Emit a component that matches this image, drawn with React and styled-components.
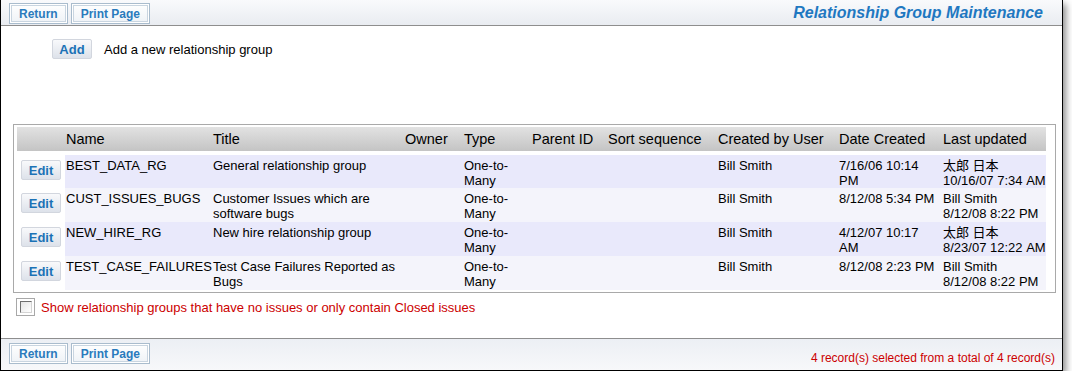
import React from 'react';
import styled, { createGlobalStyle } from 'styled-components';

const GlobalStyle = createGlobalStyle`
  body {
    margin: 0;
    background: #ffffff;
    font-family: "Liberation Sans", Arial, sans-serif;
  }
`;

const Window = styled.div`
  width: 1061px;
  height: 370px;
  border: 1px solid #000;
  border-top: none;
  box-shadow: 3px 4px 7px rgba(0, 0, 0, 0.45);
  display: flex;
  flex-direction: column;
  background: #fff;
`;

const Bar = styled.div`
  display: flex;
  align-items: flex-start;
  justify-content: space-between;
  box-sizing: border-box;
  height: ${(p) => (p.bottom ? '32px' : '26px')};
  padding: ${(p) => (p.bottom ? '4px 7px 0 8px' : '3px 19px 0 8px')};
  background: ${(p) =>
    p.bottom
      ? 'linear-gradient(#eceff4, #f7f8fa)'
      : 'linear-gradient(#f9fafc, #e9ecf1)'};
  border-top: ${(p) => (p.bottom ? '1px solid #8e8e8e' : 'none')};
  border-bottom: ${(p) => (p.bottom ? 'none' : '1px solid #8e8e8e')};
`;

const ButtonGroup = styled.div`
  display: flex;
  gap: 3px;
`;

const BarButton = styled.button`
  height: 21px;
  padding: 0 9px;
  border: 1px solid #a9bccd;
  box-shadow: inset 0 0 0 1px #ffffff, inset 0 0 0 2px #c9d5e0;
  background: linear-gradient(#ffffff, #eef2f6);
  color: #2a7bbd;
  font-family: "Liberation Sans", Arial, sans-serif;
  font-size: 12px;
  font-weight: bold;
  cursor: pointer;
`;

const Title = styled.h1`
  margin: 0;
  font-size: 16px;
  line-height: 20px;
  font-style: italic;
  font-weight: bold;
  color: #1f78c1;
`;

const Status = styled.span`
  margin-top: 8px;
  font-size: 12px;
  color: #cc0000;
`;

const Content = styled.div`
  flex: 1;
  padding: 13px 10px 0 12px;
  display: flex;
  flex-direction: column;
`;

const AddRow = styled.div`
  display: flex;
  align-items: center;
  gap: 12px;
  padding-left: 39px;
  font-size: 13px;
  color: #000;
`;

const SmallButton = styled.button`
  height: 20px;
  width: 40px;
  padding: 0;
  border: 1px solid #d2d6de;
  border-radius: 2px;
  background: linear-gradient(#f8f9fb, #dde2ea);
  color: #1b72b6;
  font-family: "Liberation Sans", Arial, sans-serif;
  font-size: 13px;
  font-weight: bold;
  cursor: pointer;
`;

const TableBox = styled.div`
  margin-top: 65px;
  width: 1035px;
  border: 1px solid #a9a9a9;
  padding: 2px 3px 2px 3px;
`;

const Grid = styled.table`
  width: 1029px;
  table-layout: fixed;
  border-collapse: collapse;
  font-size: 13px;
  line-height: 15px;
  color: #000;
`;

const Th = styled.th`
  height: 24px;
  padding: 0 1px;
  font-size: 14.5px;
  font-weight: normal;
  text-align: left;
  background: linear-gradient(#e2e2e2, #c4c4c4);
  border-bottom: 4px solid #fff;
  white-space: nowrap;
`;

const Row = styled.tr`
  height: 34px;
  background: ${(p) => (p.alt ? '#f4f4fb' : '#e9e9fb')};
`;

const Td = styled.td`
  vertical-align: top;
  padding: 3px ${(p) => (p.tight ? '5px' : '1px')} 0 1px;
  overflow: visible;
  white-space: ${(p) => (p.nowrap ? 'nowrap' : 'normal')};
`;

const EditCell = styled.td`
  vertical-align: top;
  padding: 5px 0 0 4px;
  background: #fff;
`;

const CheckRow = styled.label`
  display: flex;
  align-items: center;
  gap: 6px;
  margin-top: 5px;
  margin-left: 3px;
  font-size: 13px;
  color: #cc0000;
`;

const CheckFrame = styled.span`
  width: 17px;
  height: 16px;
  border: 1px solid #a8a8a8;
  display: flex;
  align-items: center;
  justify-content: center;
  background: #fff;
`;

const CheckBox = styled.span`
  width: 10px;
  height: 10px;
  border: 1px solid #6e6e6e;
  border-right-color: #d4d4d4;
  border-bottom-color: #d4d4d4;
  background: linear-gradient(135deg, #e4e4e4, #ffffff);
`;

const Cjk = styled.span`
  font-family: "Liberation Sans", "Noto Sans CJK JP", sans-serif;
`;

const columns = [
  { w: 48 },
  { w: 147, label: 'Name' },
  { w: 192, label: 'Title' },
  { w: 59, label: 'Owner' },
  { w: 68, label: 'Type' },
  { w: 76, label: 'Parent ID' },
  { w: 110, label: 'Sort sequence' },
  { w: 121, label: 'Created by User' },
  { w: 104, label: 'Date Created' },
  { w: 104, label: 'Last updated' },
];

const groups = [
  {
    name: 'BEST_DATA_RG',
    title: 'General relationship group',
    created: '7/16/06 10:14 PM',
    updatedBy: '太郎 日本',
    updated: '10/16/07 7:34 AM',
  },
  {
    name: 'CUST_ISSUES_BUGS',
    title: 'Customer Issues which are software bugs',
    created: '8/12/08 5:34 PM',
    updatedBy: 'Bill Smith',
    updated: '8/12/08 8:22 PM',
  },
  {
    name: 'NEW_HIRE_RG',
    title: 'New hire relationship group',
    created: '4/12/07 10:17 AM',
    updatedBy: '太郎 日本',
    updated: '8/23/07 12:22 AM',
  },
  {
    name: 'TEST_CASE_FAILURES',
    title: 'Test Case Failures Reported as Bugs',
    created: '8/12/08 2:23 PM',
    updatedBy: 'Bill Smith',
    updated: '8/12/08 8:22 PM',
  },
];

const Toolbar = ({ bottom, children }) => (
  <Bar bottom={bottom}>
    <ButtonGroup>
      <BarButton>Return</BarButton>
      <BarButton>Print Page</BarButton>
    </ButtonGroup>
    {children}
  </Bar>
);

const App = () => {
  return (
    <>
      <GlobalStyle />
      <Window>
        <Toolbar>
          <Title>Relationship Group Maintenance</Title>
        </Toolbar>

        <Content>
          <AddRow>
            <SmallButton>Add</SmallButton>
            <span>Add a new relationship group</span>
          </AddRow>

          <TableBox>
            <Grid>
              <colgroup>
                {columns.map((c, i) => (
                  <col key={i} style={{ width: c.w }} />
                ))}
              </colgroup>
              <thead>
                <tr>
                  {columns.map((c, i) => (
                    <Th key={i}>{c.label}</Th>
                  ))}
                </tr>
              </thead>
              <tbody>
                {groups.map((g, i) => (
                  <Row key={g.name} alt={i % 2 === 1}>
                    <EditCell>
                      <SmallButton>Edit</SmallButton>
                    </EditCell>
                    <Td nowrap>{g.name}</Td>
                    <Td>{g.title}</Td>
                    <Td />
                    <Td>One-to-Many</Td>
                    <Td />
                    <Td />
                    <Td>Bill Smith</Td>
                    <Td tight>{g.created}</Td>
                    <Td nowrap>
                      <Cjk>{g.updatedBy}</Cjk>
                      <br />
                      {g.updated}
                    </Td>
                  </Row>
                ))}
              </tbody>
            </Grid>
          </TableBox>

          <CheckRow>
            <CheckFrame>
              <CheckBox />
            </CheckFrame>
            Show relationship groups that have no issues or only contain Closed issues
          </CheckRow>
        </Content>

        <Toolbar bottom>
          <Status>4 record(s) selected from a total of 4 record(s)</Status>
        </Toolbar>
      </Window>
    </>
  );
};

export default App;
